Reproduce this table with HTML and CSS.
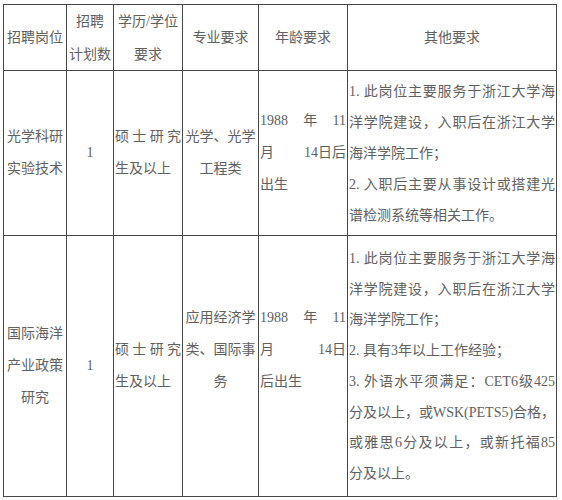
FILE: index.html
```html
<!DOCTYPE html>
<html lang="zh-CN">
<head>
<meta charset="utf-8">
<title>招聘岗位</title>
<link rel="stylesheet" href="styles.css">
</head>
<body>
<div class="sheet">
  <div class="cell c">招聘岗位</div>
  <div class="cell c two"><span>招聘</span><span>计划数</span></div>
  <div class="cell c two"><span>学历/学位</span><span>要求</span></div>
  <div class="cell c">专业要求</div>
  <div class="cell c">年龄要求</div>
  <div class="cell c">其他要求</div>

  <div class="cell c tall"><span>光学科研</span><span>实验技术</span></div>
  <div class="cell c">1</div>
  <div class="cell"><span class="sb"><span>硕</span><span>士</span><span>研</span><span>究</span></span><span>生及以上</span></div>
  <div class="cell c"><span>光学、光学</span><span>工程类</span></div>
  <div class="cell"><span class="sb"><span>1988</span><span>年</span><span>11</span></span><span class="sb"><span>月</span><span>14日后</span></span><span>出生</span></div>
  <div class="cell other">
    <span class="ln j">1. 此岗位主要服务于浙江大学海</span>
    <span class="ln j">洋学院建设，入职后在浙江大学</span>
    <span class="ln">海洋学院工作；</span>
    <span class="ln j">2. 入职后主要从事设计或搭建光</span>
    <span class="ln">谱检测系统等相关工作。</span>
  </div>

  <div class="cell c tall"><span>国际海洋</span><span>产业政策</span><span>研究</span></div>
  <div class="cell c">1</div>
  <div class="cell tall"><span class="sb"><span>硕</span><span>士</span><span>研</span><span>究</span></span><span>生及以上</span></div>
  <div class="cell c raised"><span>应用经济学</span><span>类、国际事</span><span>务</span></div>
  <div class="cell raised"><span class="sb"><span>1988</span><span>年</span><span>11</span></span><span class="sb"><span>月</span><span>14日</span></span><span>后出生</span></div>
  <div class="cell other top">
    <span class="ln j">1. 此岗位主要服务于浙江大学海</span>
    <span class="ln j">洋学院建设，入职后在浙江大学</span>
    <span class="ln">海洋学院工作；</span>
    <span class="ln">2. 具有3年以上工作经验；</span>
    <span class="ln j">3. 外语水平须满足：CET6级425</span>
    <span class="ln j">分及以上，或WSK(PETS5)合格，</span>
    <span class="ln j">或雅思6分及以上，或新托福85</span>
    <span class="ln">分及以上。</span>
  </div>
</div>
</body>
</html>
```

FILE: styles.css
```css
html, body {
  margin: 0;
  padding: 0;
  background: #ffffff;
}

.sheet {
  margin: 4px 0 0 3px;
  display: grid;
  grid-template-columns: 63px 47px 69px 76px 89px 209px;
  grid-template-rows: 66px 165px 261px;
  width: max-content;
  border-left: 1px solid #474747;
  border-top: 1px solid #474747;
  font-family: "Liberation Serif", "Noto Sans CJK SC", serif;
  font-size: 14px;
  color: #616161;
}

.cell {
  display: flex;
  flex-direction: column;
  justify-content: center;
  padding: 0 1px;
  border-right: 1px solid #474747;
  border-bottom: 1px solid #474747;
  line-height: 32px;
  white-space: nowrap;
  overflow: hidden;
}

.c {
  text-align: center;
}

.two {
  line-height: 33px;
}

.tall {
  line-height: 32px;
}

.raised {
  padding-bottom: 32px;
}

.sb {
  display: flex;
  justify-content: space-between;
}

.other {
  line-height: 31px;
}

.other.top {
  justify-content: flex-start;
  padding-top: 8px;
  line-height: 30.7px;
}

.ln {
  display: block;
  text-align: left;
}

.j {
  text-align: justify;
  text-align-last: justify;
}
```
